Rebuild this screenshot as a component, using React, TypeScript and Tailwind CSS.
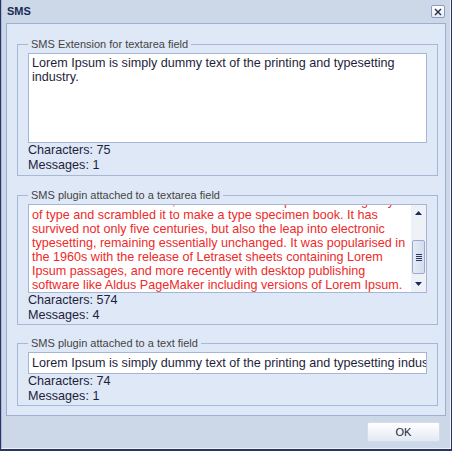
import React from "react";

const scrolledLines = [
  "text ever since the 1500s, when an unknown printer took a galley",
  "of type and scrambled it to make a type specimen book. It has",
  "survived not only five centuries, but also the leap into electronic",
  "typesetting, remaining essentially unchanged. It was popularised in",
  "the 1960s with the release of Letraset sheets containing Lorem",
  "Ipsum passages, and more recently with desktop publishing",
  "software like Aldus PageMaker including versions of Lorem Ipsum.",
];

function Counter({ chars, messages }: { chars: number; messages: number }) {
  return (
    <div className="text-[12.6px] leading-[15px] text-[#1e1e3c]">
      <div>Characters: {chars}</div>
      <div>Messages: {messages}</div>
    </div>
  );
}

function Group({
  title,
  className,
  children,
}: {
  title: string;
  className?: string;
  children: React.ReactNode;
}) {
  return (
    <fieldset className={`w-[421px] min-w-0 border border-[#a7b8d6] px-[10px] ${className ?? ""}`}>
      <legend className="px-[3px] text-[11px] leading-[14px] text-[#444]">{title}</legend>
      {children}
    </fieldset>
  );
}

function Scrollbar() {
  return (
    <div className="w-[15px] h-full flex flex-col bg-[#eef1f7]">
      <div className="h-[16px] flex items-center justify-center">
        <svg width="7" height="4" viewBox="0 0 7 4">
          <path d="M0 4 L3.5 0 L7 4 Z" fill="#1f2a50" />
        </svg>
      </div>
      <div className="h-[19px]" />
      <div className="mx-[1px] h-[34px] rounded-[2px] border border-[#98abcd] bg-gradient-to-r from-[#e4ebf5] to-[#d3deee] flex flex-col items-center justify-center gap-[1px]">
        <div className="w-[6px] h-[1px] bg-[#2c3660]" />
        <div className="w-[6px] h-[1px] bg-[#2c3660]" />
        <div className="w-[6px] h-[1px] bg-[#2c3660]" />
        <div className="w-[6px] h-[1px] bg-[#2c3660]" />
      </div>
      <div className="flex-1" />
      <div className="h-[16px] flex items-center justify-center">
        <svg width="7" height="4" viewBox="0 0 7 4">
          <path d="M0 0 L3.5 4 L7 0 Z" fill="#1f2a50" />
        </svg>
      </div>
    </div>
  );
}

export default function App() {
  return (
    <div className="w-[452px] h-[451px] flex flex-col bg-[#ccd8e8] border-l border-r border-b-2 border-[#2c3663] font-['Liberation_Sans',Arial,sans-serif]">
      <div className="flex-1 flex flex-col border-l border-r border-b border-l-[#aab8dc] border-r-[#eef3fa] border-b-[#eef3fa]">
        {/* title bar */}
        <div className="h-[23px] flex items-center justify-between pl-[5px] pr-[5px]">
          <span className="text-[11px] font-bold text-[#1b2a55]">SMS</span>
          <button className="w-[14px] h-[13px] flex items-center justify-center rounded-[2px] border border-[#8a9cc2] bg-gradient-to-b from-white to-[#e6ecf5]">
            <svg width="8" height="8" viewBox="0 0 8 8">
              <path d="M1 1 L7 7 M7 1 L1 7" stroke="#1f2a50" strokeWidth="1.4" />
            </svg>
          </button>
        </div>

        {/* body */}
        <div className="ml-[4px] w-[440px] h-[393px] border border-[#9db0d2] bg-[#dfe8f6] pt-[13px] pl-[10px]">
          <Group title="SMS Extension for textarea field" className="pb-[2px]">
            <div className="mt-[2px] h-[90px] border border-[#a5b5d5] bg-white pl-[3px] pt-[2px] text-[12.6px] leading-[14px] text-[#1e1e3c]">
              Lorem Ipsum is simply dummy text of the printing and typesetting industry.
            </div>
            <Counter chars={75} messages={1} />
          </Group>

          <Group title="SMS plugin attached to a textarea field" className="mt-[12px] pb-[1px]">
            <div className="mt-[2px] h-[89px] border border-[#a5b5d5] bg-white flex overflow-hidden">
              <div className="flex-1 min-w-0 overflow-hidden pl-[3px] pt-[2px] text-[12.6px] leading-[14px] text-[#ee2a2a]">
                <div className="-mt-[13px]">
                  {scrolledLines.map((line) => (
                    <div key={line} className="whitespace-nowrap">
                      {line}
                    </div>
                  ))}
                </div>
              </div>
              <Scrollbar />
            </div>
            <Counter chars={574} messages={4} />
          </Group>

          <Group title="SMS plugin attached to a text field" className="mt-[11px] pb-[1px]">
            <div className="mt-[2px] w-full h-[22px] border border-[#a5b5d5] bg-white pl-[3px] flex items-center overflow-hidden text-[12.6px] text-[#1e1e3c]">
              <span className="whitespace-nowrap">
                Lorem Ipsum is simply dummy text of the printing and typesetting industry.
              </span>
            </div>
            <Counter chars={74} messages={1} />
          </Group>
        </div>

        {/* footer */}
        <div className="flex justify-end pt-[6px] pr-[10px]">
          <button className="w-[73px] h-[20px] rounded-[2px] border border-[#d3dcea] bg-gradient-to-b from-white to-[#e3e9f3] text-[11px] text-[#1e1e3c]">
            OK
          </button>
        </div>
      </div>
    </div>
  );
}
